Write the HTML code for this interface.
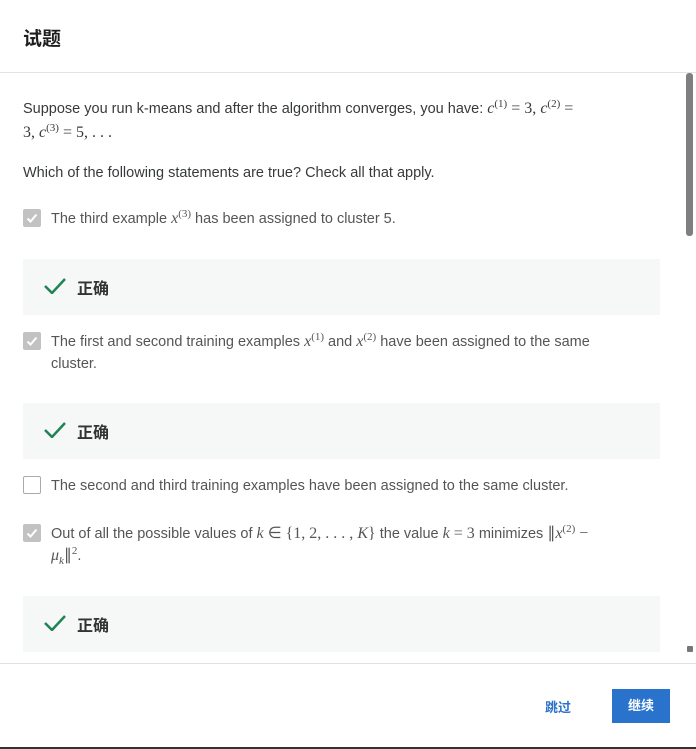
<!DOCTYPE html>
<html><head><meta charset="utf-8"><style>
*{margin:0;padding:0;box-sizing:border-box}
body{width:696px;height:749px;background:#fff;font-family:"Liberation Sans","Noto Sans CJK SC",sans-serif;color:#333;position:relative;overflow:hidden}
.hdr{position:absolute;left:0;top:0;width:696px;height:73px;border-bottom:1px solid #e3e3e3}
.hdr h1{position:absolute;left:23px;top:24px;font-size:19px;font-weight:bold;color:#1f1f1f}
.m{font-family:"Liberation Serif","DejaVu Serif",serif;font-style:italic;font-size:16px}
.n{font-family:"Liberation Serif",serif;font-size:16px}
sup,sub{font-size:11px;font-family:"Liberation Serif",serif;line-height:0}
.t{position:absolute;left:23px;font-size:14.5px;color:#373a3c;line-height:23px}
.opt{position:absolute;left:23px;font-size:14.5px;color:#555;line-height:22px;padding-left:28px;width:588px}
.cb{position:absolute;left:0;top:1px;width:18px;height:18px;border-radius:2px;background:#c2c2c2}
.cb.e{background:#fff;border:1.5px solid #aaa}
.cb svg{position:absolute;left:3px;top:3px}
.ok{position:absolute;left:23px;width:637px;height:56px;background:#f5f8f7}
.ok svg{position:absolute;left:21px;top:19px}
.ok span{position:absolute;left:54px;top:16px;font-size:16px;font-weight:bold;color:#333}
.sb{position:absolute;left:686px;top:73px;width:7px;height:163px;background:#7f7f7f;border-radius:3px}
.ft{position:absolute;left:0;top:663px;width:696px;border-top:1px solid #e0e0e0}
.skip{position:absolute;left:545px;top:697px;font-size:13px;font-weight:bold;color:#2a73cc}
.go{position:absolute;left:612px;top:689px;width:58px;height:34px;background:#2a73cc;color:#fff;font-size:13px;font-weight:bold;text-align:center;line-height:34px}
</style></head><body>
<div class="hdr"><h1>试题</h1></div>
<div class="sb"></div>
<div style="position:absolute;left:687px;top:646px;width:6px;height:6px;background:#777;border-radius:1px"></div>
<div class="t" style="top:97px;width:590px">Suppose you run k-means and after the algorithm converges, you have: <span class="m">c</span><sup>(1)</sup> <span class="n">= 3,</span> <span class="m">c</span><sup>(2)</sup> <span class="n">=<br>3,</span> <span class="m">c</span><sup>(3)</sup> <span class="n">= 5, . . .</span></div>
<div class="t" style="top:162px">Which of the following statements are true? Check all that apply.</div>
<div class="opt" style="top:208px"><div class="cb"><svg width="12" height="12"><path d="M1.5 6.5 L4.5 9.5 L10.5 2.5" stroke="#fff" stroke-width="2" fill="none"/></svg></div>The third example <span class="m">x</span><sup>(3)</sup> has been assigned to cluster 5.</div>
<div class="ok" style="top:259px"><svg width="22" height="16"><path d="M1 8 L8 15 L21 1" stroke="#1f8354" stroke-width="2.5" fill="none"/></svg><span>正确</span></div>
<div class="opt" style="top:331px"><div class="cb"><svg width="12" height="12"><path d="M1.5 6.5 L4.5 9.5 L10.5 2.5" stroke="#fff" stroke-width="2" fill="none"/></svg></div>The first and second training examples <span class="m">x</span><sup>(1)</sup> and <span class="m">x</span><sup>(2)</sup> have been assigned to the same cluster.</div>
<div class="ok" style="top:403px"><svg width="22" height="16"><path d="M1 8 L8 15 L21 1" stroke="#1f8354" stroke-width="2.5" fill="none"/></svg><span>正确</span></div>
<div class="opt" style="top:475px"><div class="cb e"></div>The second and third training examples have been assigned to the same cluster.</div>
<div class="opt" style="top:523px"><div class="cb"><svg width="12" height="12"><path d="M1.5 6.5 L4.5 9.5 L10.5 2.5" stroke="#fff" stroke-width="2" fill="none"/></svg></div>Out of all the possible values of <span class="m">k</span> <span class="n">∈ {1, 2, . . . ,</span> <span class="m">K</span><span class="n">}</span> the value <span class="m">k</span> <span class="n">= 3</span> minimizes <span class="n">∥</span><span class="m">x</span><sup>(2)</sup> <span class="n">−<br></span><span class="m">μ<sub>k</sub></span><span class="n">∥</span><sup>2</sup>.</div>
<div class="ok" style="top:596px"><svg width="22" height="16"><path d="M1 8 L8 15 L21 1" stroke="#1f8354" stroke-width="2.5" fill="none"/></svg><span>正确</span></div>
<div class="ft"></div>
<div class="skip">跳过</div>
<div class="go">继续</div>
<div style="position:absolute;left:0;top:747px;width:696px;height:2px;background:#333"></div>
</body></html>
